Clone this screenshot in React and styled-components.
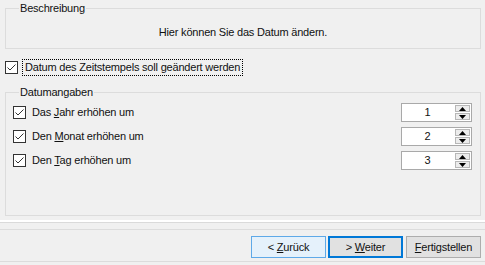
import React from 'react'
import styled, { createGlobalStyle } from 'styled-components'

const GlobalStyle = createGlobalStyle`
  html, body {
    margin: 0;
    padding: 0;
    background: #f0f0f0;
  }
  body {
    font-family: "Liberation Sans", Arial, sans-serif;
    font-size: 11px;
    letter-spacing: -0.2px;
    color: #111;
  }
`

const Page = styled.div`
  width: 485px;
  height: 265px;
  display: flex;
  flex-direction: column;
  overflow: hidden;
  background: #f0f0f0;
`

const Content = styled.div`
  padding: 2px 4px 0 5px;
  display: flex;
  flex-direction: column;
`

const Group = styled.fieldset`
  margin: ${p => p.$top || 0}px 0 0 0;
  padding: ${p => p.$padTop}px 7px ${p => p.$padBottom}px 7px;
  border: 1px solid #dcdcdc;
  min-width: 0;
  display: flex;
  flex-direction: column;
  gap: 5px;
`

const Legend = styled.legend`
  padding: 0 1px;
  margin-left: 6px;
  line-height: 13px;
`

const Description = styled.div`
  line-height: 13px;
  text-align: center;
`

const Row = styled.label`
  display: flex;
  align-items: center;
  height: ${p => p.$height || 19}px;
  margin-top: ${p => p.$top || 0}px;
`

const Box = styled.span`
  width: 13px;
  height: 13px;
  box-sizing: border-box;
  border: 1px solid #333;
  background: #fff;
  display: flex;
  align-items: center;
  justify-content: center;
  flex: none;
`

const Caption = styled.span`
  line-height: 13px;
  margin-left: ${p => (p.$focus ? 4 : 6)}px;
  padding: ${p => (p.$focus ? '1px 2px' : '0')};
  border: ${p => (p.$focus ? '1px dotted #000' : 'none')};
  white-space: nowrap;
`

const Spacer = styled.div`
  flex: 1;
`

const Spinner = styled.div`
  width: 71px;
  height: 19px;
  box-sizing: border-box;
  border: 1px solid #a9a9a9;
  background: #fff;
  display: flex;
  margin-right: 1px;
`

const SpinValue = styled.div`
  flex: 1;
  text-align: center;
  line-height: 17px;
  padding-right: 2px;
`

const SpinButtons = styled.div`
  width: 15px;
  display: flex;
  flex-direction: column;
  padding: 1px 1px 1px 0;
  gap: 1px;
`

const SpinButton = styled.div`
  flex: 1;
  box-sizing: border-box;
  border: 1px solid #b7b7b7;
  background: #ececec;
  display: flex;
  align-items: center;
  justify-content: center;
`

const Separator = styled.div`
  margin-top: 4px;
  border-top: 2px solid #fff;
  border-bottom: 1px solid #dadada;
`

const ButtonBar = styled.div`
  margin-top: 6px;
  height: 33px;
  box-sizing: border-box;
  border-top: 1px solid #dcdcdc;
  border-bottom: 1px solid #dcdcdc;
  display: flex;
  justify-content: flex-end;
  align-items: flex-start;
  padding: 6px 4px 0 0;
  gap: 2px;
`

const Button = styled.button`
  width: 75px;
  height: 22px;
  box-sizing: border-box;
  font-family: inherit;
  font-size: 11px;
  letter-spacing: -0.2px;
  color: #111;
  padding: 0;
  background: ${p => (p.$hover ? '#e5f1fb' : '#e1e1e1')};
  border: ${p =>
    p.$default ? '2px solid #0078d7' : p.$hover ? '1px solid #5ea9e8' : '1px solid #adadad'};
  margin-left: ${p => p.$gap || 0}px;
`

const Check = () => (
  <Box>
    <svg width="11" height="11" viewBox="0 0 11 11">
      <path d="M1.5 5.5 L4 8 L9.5 2.5" fill="none" stroke="#333" strokeWidth="1" />
    </svg>
  </Box>
)

const Arrow = ({ up }) => (
  <svg width="7" height="4" viewBox="0 0 7 4">
    <path d={up ? 'M0 4 L3.5 0 L7 4 Z' : 'M0 0 L3.5 4 L7 0 Z'} fill="#000" />
  </svg>
)

const fields = [
  { pre: 'Das ', key: 'J', post: 'ahr erhöhen um', value: 1 },
  { pre: 'Den ', key: 'M', post: 'onat erhöhen um', value: 2 },
  { pre: 'Den ', key: 'T', post: 'ag erhöhen um', value: 3 },
]

export default function App() {
  return (
    <Page>
      <GlobalStyle />
      <Content>
        <Group $padTop={11} $padBottom={9}>
          <Legend>Beschreibung</Legend>
          <Description>Hier können Sie das Datum ändern.</Description>
        </Group>

        <Row $height={17} $top={10}>
          <Check />
          <Caption $focus>
            Datum des Zeitstempels soll <u>g</u>eändert werden
          </Caption>
        </Row>

        <Group $top={10} $padTop={4} $padBottom={45}>
          <Legend>Datumangaben</Legend>
          {fields.map(f => (
            <Row key={f.key}>
              <Check />
              <Caption>
                {f.pre}
                <u>{f.key}</u>
                {f.post}
              </Caption>
              <Spacer />
              <Spinner>
                <SpinValue>{f.value}</SpinValue>
                <SpinButtons>
                  <SpinButton>
                    <Arrow up />
                  </SpinButton>
                  <SpinButton>
                    <Arrow />
                  </SpinButton>
                </SpinButtons>
              </Spinner>
            </Row>
          ))}
        </Group>
      </Content>

      <Separator />
      <ButtonBar>
        <Button $hover>
          &lt; <u>Z</u>urück
        </Button>
        <Button $default>
          &gt; <u>W</u>eiter
        </Button>
        <Button $gap={1}>
          <u>F</u>ertigstellen
        </Button>
      </ButtonBar>
    </Page>
  )
}
